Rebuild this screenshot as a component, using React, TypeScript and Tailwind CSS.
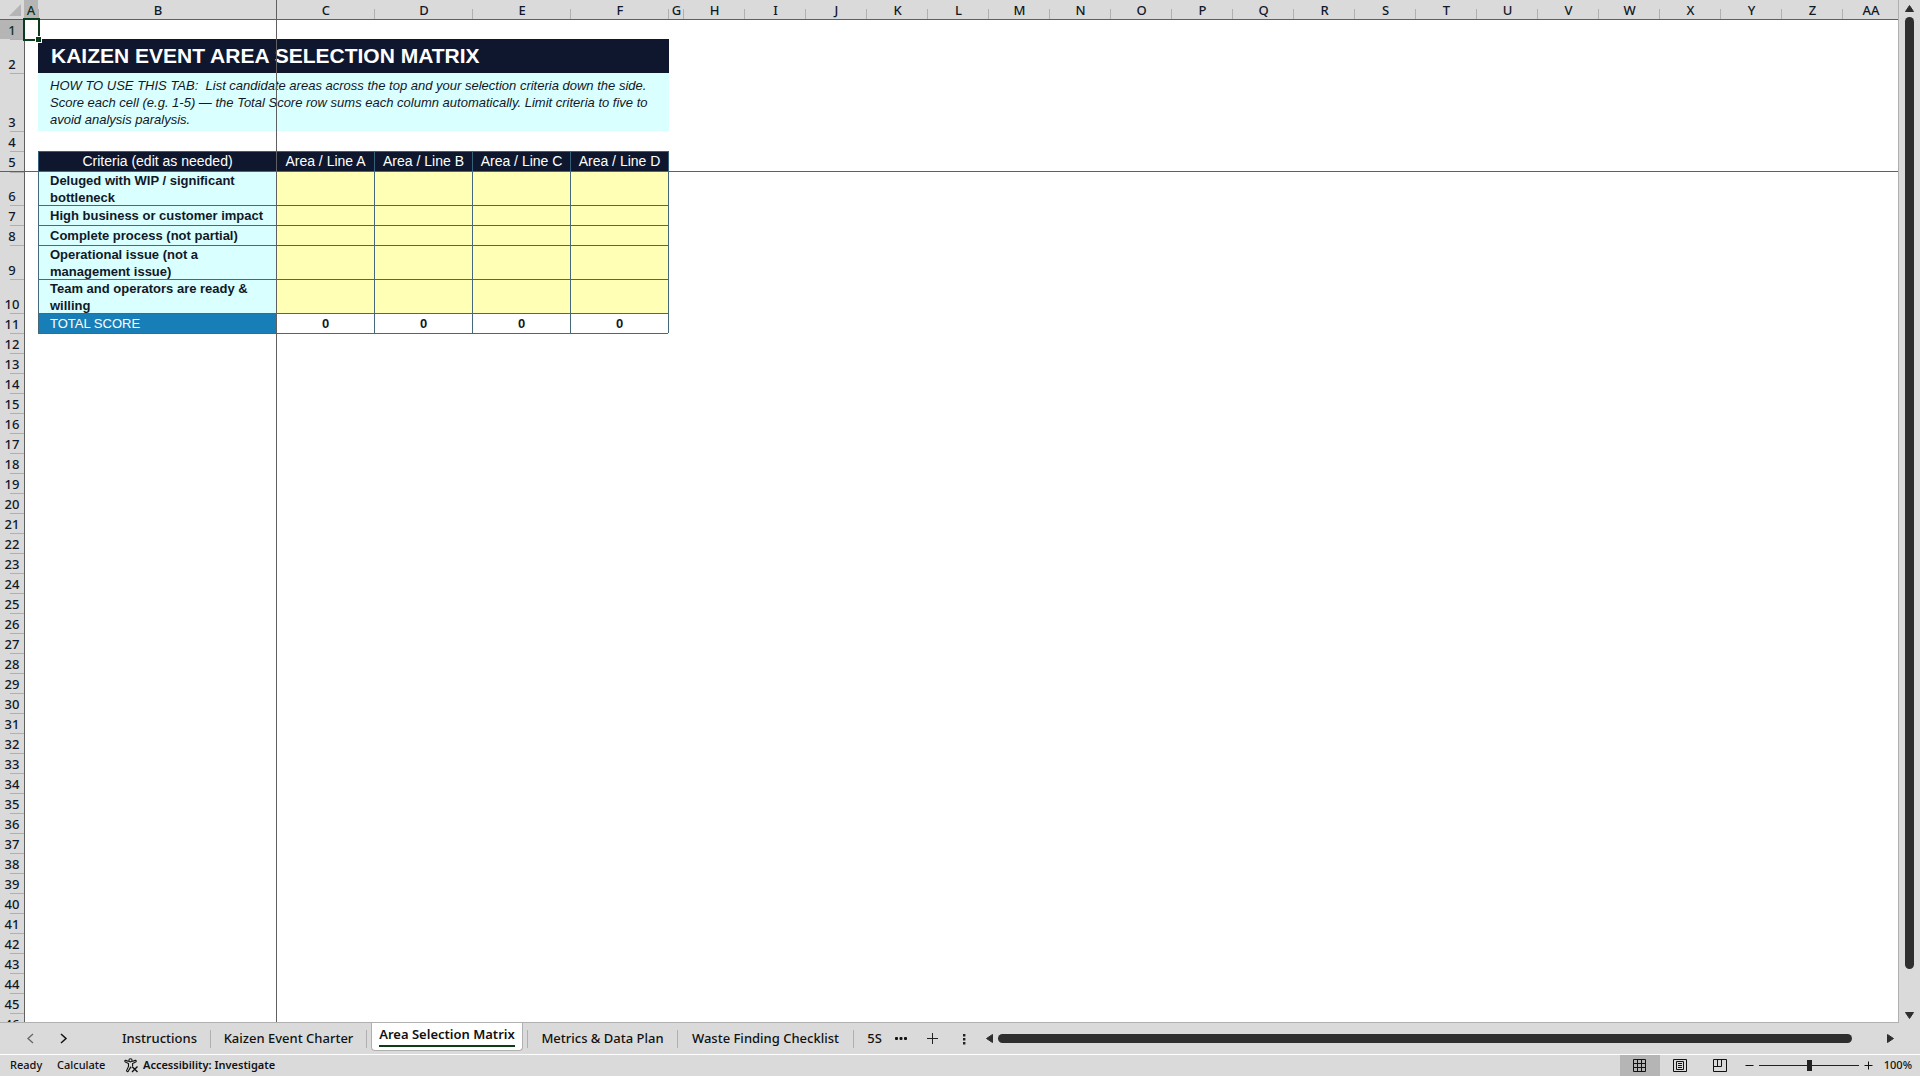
import type { ReactNode } from "react";

const COLUMNS = [
  "A", "B", "C", "D", "E", "F", "G", "H", "I", "J", "K", "L", "M", "N",
  "O", "P", "Q", "R", "S", "T", "U", "V", "W", "X", "Y", "Z", "AA",
];

const AREAS = ["Area / Line A", "Area / Line B", "Area / Line C", "Area / Line D"];

const CRITERIA = [
  { row: 6, height: "h-[34px]", inner: "h-[33px]", label: "Deluged with WIP / significant bottleneck" },
  { row: 7, height: "h-5", inner: "h-[19px]", label: "High business or customer impact" },
  { row: 8, height: "h-5", inner: "h-[19px]", label: "Complete process (not partial)" },
  { row: 9, height: "h-[34px]", inner: "h-[33px]", label: "Operational issue (not a management issue)" },
  { row: 10, height: "h-[34px]", inner: "h-[33px]", label: "Team and operators are ready & willing" },
];

const EMPTY_ROWS = Array.from({ length: 34 }, (_, i) => i + 13);

function colWidth(name: string) {
  if (name === "A") return "w-[14px]";
  if (name === "B") return "w-[238px]";
  if (name === "G") return "w-[15px]";
  if (name === "AA") return "";
  if (["C", "D", "E", "F"].includes(name)) return "w-[98px]";
  return "w-[61px]";
}

function RowHead({ n, line = "" }: { n: number; line?: string }) {
  const look =
    n === 1
      ? "bg-[#b5b5b5] text-[#10331c]"
      : "bg-[#dadada] bg-[linear-gradient(#b0b0b0,#b0b0b0)] bg-[length:14px_1px] bg-[position:right_top] bg-no-repeat";
  return (
    <th scope="row" className={`p-0 align-bottom text-[13px] leading-[17px] font-medium ${look} ${line}`}>
      {n}
    </th>
  );
}

function Sheet() {
  return (
    <div className="relative min-w-0 flex-1 overflow-hidden border-r border-b border-[#b0b0b0] bg-white">
      <table className="w-full table-fixed border-separate border-spacing-0 font-['Liberation_Sans',Arial,sans-serif] text-[13px] text-[#111827]">
        <colgroup>
          <col className="w-6" />
          {COLUMNS.map((c) => (
            <col key={c} className={colWidth(c)} />
          ))}
        </colgroup>
        <thead className="font-['Noto_Sans','Segoe_UI',sans-serif]">
          <tr className="h-[19px]">
            <th className="bg-[#dadada] p-0">
              <svg width="12" height="12" viewBox="0 0 12 12" className="mr-[3px] ml-auto" aria-hidden="true">
                <path d="M12 0v12H0z" fill="#b5b5b5" />
              </svg>
            </th>
            {COLUMNS.map((c) => (
              <th
                key={c}
                scope="col"
                className={
                  c === "A"
                    ? "bg-[#b5b5b5] p-0 pt-0.5 text-[13px] leading-[17px] font-medium text-[#10331c]"
                    : "bg-[#dadada] bg-[linear-gradient(#b0b0b0,#b0b0b0)] bg-[length:1px_10px] bg-[position:left_bottom] bg-no-repeat p-0 pt-0.5 pl-0.5 text-[13px] leading-[17px] font-medium"
                }
              >
                {c}
              </th>
            ))}
          </tr>
        </thead>
        <tbody className="[&>tr>th]:font-['Noto_Sans','Segoe_UI',sans-serif]">
          <tr className="h-5">
            <RowHead n={1} line="border-t border-[#606060]" />
            <td className="relative border-t border-l border-[#606060] p-0">
              <div className="absolute -top-0.5 -left-0.5 z-10 h-[23px] w-[17px] border-2 border-[#0b3d1a]">
                <span className="absolute -right-[3px] -bottom-[3px] size-[5px] bg-[#0b3d1a] outline-1 outline-white" />
              </div>
            </td>
            <td colSpan={26} className="border-t border-[#606060] p-0" />
          </tr>
          <tr className="h-[34px]">
            <RowHead n={2} />
            <td className="border-l border-[#606060] p-0" />
            <td colSpan={5} className="bg-[#0f172e] p-0 pl-[13px] text-[21px] leading-6 font-bold whitespace-nowrap text-white">
              KAIZEN EVENT AREA SELECTION MATRIX
            </td>
            <td colSpan={21} className="border-l border-[#0f172e] p-0" />
          </tr>
          <tr className="h-[58px]">
            <RowHead n={3} />
            <td className="border-l border-[#606060] p-0" />
            <td colSpan={5} className="bg-[#d9ffff] p-0 pt-1 pl-3 align-top leading-[17px] whitespace-nowrap italic">
              HOW TO USE THIS TAB:&nbsp; List candidate areas across the top and your selection criteria down the side.
              <br />
              Score each cell (e.g. 1-5) — the Total Score row sums each column automatically. Limit criteria to five to
              <br />
              avoid analysis paralysis.
            </td>
            <td colSpan={21} className="border-l border-[#d9ffff] p-0" />
          </tr>
          <tr className="h-5">
            <RowHead n={4} />
            <td colSpan={27} className="border-l border-[#606060] p-0" />
          </tr>
          <tr className="h-5">
            <RowHead n={5} />
            <td className="border-l border-[#606060] p-0" />
            <td className="border-t border-l border-[#35607c] bg-[#0f172e] p-0 text-center text-sm leading-[17px] text-white">
              Criteria (edit as needed)
            </td>
            {AREAS.map((area) => (
              <td
                key={area}
                className="border-t border-l border-[#35607c] bg-[#0f172e] p-0 text-center text-sm leading-[17px] whitespace-nowrap text-white"
              >
                {area}
              </td>
            ))}
            <td className="border-l border-[#35607c] p-0" />
            <td colSpan={20} className="p-0" />
          </tr>
          {CRITERIA.map((c) => {
            const top = c.row === 6 ? "border-t-[#606060]" : "border-t-[#45697a]";
            return (
              <tr key={c.row} className={c.height}>
                <RowHead n={c.row} line={c.row === 6 ? "border-t border-[#606060]" : ""} />
                <td className={`border-l border-[#606060] p-0 ${c.row === 6 ? "border-t" : ""}`} />
                <td className={`border-t border-l border-l-[#45697a] bg-[#d9ffff] p-0 pl-[11px] font-bold ${top}`}>
                  <div className={`flex items-center leading-[17px] ${c.inner}`}>{c.label}</div>
                </td>
                {AREAS.map((area) => (
                  <td key={area} className={`border-t border-l border-l-[#45697a] bg-[#ffffb5] p-0 ${top}`} />
                ))}
                <td className={`border-l border-l-[#45697a] p-0 ${c.row === 6 ? "border-t border-t-[#606060]" : ""}`} />
                <td colSpan={20} className={`border-[#606060] p-0 ${c.row === 6 ? "border-t" : ""}`} />
              </tr>
            );
          })}
          <tr className="h-5">
            <RowHead n={11} />
            <td className="border-l border-[#606060] p-0" />
            <td className="border-t border-l border-[#45697a] bg-[#177eb8] p-0 pl-[11px] leading-[17px] text-white">
              TOTAL SCORE
            </td>
            {AREAS.map((area) => (
              <td key={area} className="border-t border-l border-[#45697a] p-0 text-center leading-[17px] font-bold">
                0
              </td>
            ))}
            <td className="border-l border-[#45697a] p-0" />
            <td colSpan={20} className="p-0" />
          </tr>
          <tr className="h-5">
            <RowHead n={12} />
            <td className="border-l border-[#606060] p-0" />
            <td colSpan={5} className="border-t border-[#45697a] p-0" />
            <td colSpan={21} className="p-0" />
          </tr>
          {EMPTY_ROWS.map((n) => (
            <tr key={n} className="h-5">
              <RowHead n={n} />
              <td colSpan={27} className="border-l border-[#606060] p-0" />
            </tr>
          ))}
        </tbody>
      </table>
      {/* freeze pane line runs over the merged cells */}
      <div className="absolute inset-y-0 left-[276px] w-px bg-[#606060]" />
    </div>
  );
}

function VerticalScroll() {
  return (
    <div className="flex w-[21px] shrink-0 flex-col items-center pt-[5px] pr-px pb-1">
      <button aria-label="Scroll up" className="h-[7px]">
        <svg width="9" height="7" viewBox="0 0 9 7">
          <path d="M4.5 0.5L8.5 6.5H0.5z" fill="#2e2e2e" stroke="#2e2e2e" strokeLinejoin="round" />
        </svg>
      </button>
      <div className="mt-[5px] mb-[43px] w-[9px] flex-1 rounded-full bg-[#2e2e2e]" />
      <button aria-label="Scroll down" className="h-[7px]">
        <svg width="9" height="7" viewBox="0 0 9 7">
          <path d="M0.5 0.5H8.5L4.5 6.5z" fill="#2e2e2e" stroke="#2e2e2e" strokeLinejoin="round" />
        </svg>
      </button>
    </div>
  );
}

function Separator() {
  return <div className="h-[18px] w-px shrink-0 bg-[#b0b0b0]" />;
}

function Tab({ width, children }: { width: string; children: ReactNode }) {
  return <button className={`h-full shrink-0 text-center whitespace-nowrap ${width}`}>{children}</button>;
}

function TabBar() {
  return (
    <div className="flex h-[31px] shrink-0 items-center text-[13px] font-medium">
      <button aria-label="Previous sheet" className="ml-[26px] shrink-0">
        <svg width="9" height="11" viewBox="0 0 9 11" fill="none" stroke="#666" strokeWidth="1.3">
          <path d="M7 1L2 5.5L7 10" />
        </svg>
      </button>
      <button aria-label="Next sheet" className="ml-6 shrink-0">
        <svg width="9" height="11" viewBox="0 0 9 11" fill="none" stroke="#111" strokeWidth="1.5">
          <path d="M2 1L7 5.5L2 10" />
        </svg>
      </button>
      <div className="w-[41px] shrink-0" />
      <Tab width="w-[101px]">Instructions</Tab>
      <Separator />
      <Tab width="w-[155px]">Kaizen Event Charter</Tab>
      <Separator />
      <button className="mx-1 -mt-px flex h-[29px] w-[152px] shrink-0 items-center justify-center self-start rounded-b border border-t-0 border-[#b0b0b0] bg-white font-semibold">
        <span className="h-[22px] border-b-2 border-[#0b3d1a] leading-[19px] whitespace-nowrap">Area Selection Matrix</span>
      </button>
      <Separator />
      <Tab width="w-[149px]">Metrics &amp; Data Plan</Tab>
      <Separator />
      <Tab width="w-[175px]">Waste Finding Checklist</Tab>
      <Separator />
      <Tab width="w-[41px]">5S</Tab>
      <button aria-label="More sheets" className="shrink-0">
        <svg width="12" height="3" viewBox="0 0 12 3" fill="#111">
          <rect width="3" height="3" rx="1" />
          <rect x="4.5" width="3" height="3" rx="1" />
          <rect x="9" width="3" height="3" rx="1" />
        </svg>
      </button>
      <button aria-label="New sheet" className="ml-5 shrink-0">
        <svg width="11" height="11" viewBox="0 0 11 11" stroke="#222">
          <path d="M5.5 0v11M0 5.5h11" />
        </svg>
      </button>
      <button aria-label="Resize tabs" className="mt-0.5 ml-[25px] shrink-0">
        <svg width="3" height="11" viewBox="0 0 3 11" fill="#222">
          <path d="M0 0h2.4v2.4H0zM0 4h2.4v2.4H0zM0 8h2.4v2.4H0z" />
        </svg>
      </button>
      <button aria-label="Scroll left" className="ml-5 shrink-0">
        <svg width="7" height="9" viewBox="0 0 7 9">
          <path d="M6.5 0.5V8.5L0.5 4.5z" fill="#2e2e2e" stroke="#2e2e2e" strokeLinejoin="round" />
        </svg>
      </button>
      <div className="mr-[35px] ml-[5px] h-[9px] min-w-0 flex-1 rounded-full bg-[#2e2e2e]" />
      <button aria-label="Scroll right" className="mr-[26px] shrink-0">
        <svg width="7" height="9" viewBox="0 0 7 9">
          <path d="M0.5 0.5V8.5L6.5 4.5z" fill="#2e2e2e" stroke="#2e2e2e" strokeLinejoin="round" />
        </svg>
      </button>
    </div>
  );
}

function StatusBar() {
  return (
    <footer className="flex h-[22px] shrink-0 items-center border-t border-white text-[11px] font-medium">
      <span className="ml-[10px] w-[47px]">Ready</span>
      <span className="w-[67px]">Calculate</span>
      <button className="flex items-center gap-1 pb-px whitespace-nowrap">
        <svg width="15" height="15" viewBox="0 0 15 15" fill="none" stroke="#111" strokeWidth="1.1">
          <circle cx="6.5" cy="2.3" r="1.6" />
          <path d="M4.8 3.6L1.8 2.4C0.7 2.2 0.4 3.6 1.4 4.1L4.5 5.5V8.5L2.6 12.6C2.5 13.8 4 14 4.4 13L6.5 9.2L7.2 10.2" />
          <path d="M8.2 3.6L11.2 2.4C12.4 2.2 12.6 3.6 11.6 4.1L8.6 5.5V8" />
          <path d="M8 8.5L13.5 14M13.5 8.5L8 14" strokeWidth="1.4" />
        </svg>
        <span className="font-semibold">Accessibility: Investigate</span>
      </button>
      <div className="ml-auto flex h-full shrink-0 items-center">
        <button aria-label="Normal view" className="flex h-full w-10 items-center bg-[#b5b5b5] pl-[13px]">
          <svg width="13" height="13" viewBox="0 0 13 13" fill="none" stroke="#111">
            <path d="M0.5 0.5h12v12h-12zM4.5 0.5v12M8.5 0.5v12M0.5 4.5h12M0.5 8.5h12" />
          </svg>
        </button>
        <button aria-label="Page layout view" className="flex h-full w-10 items-center pl-[13px]">
          <svg width="14" height="13" viewBox="0 0 14 13" fill="none" stroke="#111">
            <path d="M0.5 0.5h13v12h-13zM3.5 2.5h7v8h-7zM5 4.5h4M5 6.5h4M5 8.5h4" />
          </svg>
        </button>
        <button aria-label="Page break preview" className="flex h-full w-10 items-center pl-[13px]">
          <svg width="14" height="13" viewBox="0 0 14 13" fill="none" stroke="#111">
            <path d="M0.5 0.5h13v12h-13zM4.5 0.5v7M8.5 0.5v7M0.5 7.5h8" />
          </svg>
        </button>
        <button aria-label="Zoom out" className="ml-[5px]">
          <svg width="9" height="9" viewBox="0 0 9 9" stroke="#111">
            <path d="M0.5 4.5h8" />
          </svg>
        </button>
        <input
          type="range"
          aria-label="Zoom"
          min={0}
          max={200}
          defaultValue={100}
          className="mx-[5px] h-[11px] w-[100px] appearance-none bg-[linear-gradient(#222,#222)] bg-[length:100%_1px] bg-center bg-no-repeat [&::-webkit-slider-thumb]:h-[11px] [&::-webkit-slider-thumb]:w-[5px] [&::-webkit-slider-thumb]:appearance-none [&::-webkit-slider-thumb]:bg-[#222]"
        />
        <button aria-label="Zoom in">
          <svg width="9" height="9" viewBox="0 0 9 9" stroke="#111">
            <path d="M0.5 4.5h8M4.5 0.5v8" />
          </svg>
        </button>
        <button className="mr-2 ml-2 w-[31px] text-right">100%</button>
      </div>
    </footer>
  );
}

export default function App() {
  return (
    <div className="flex h-screen flex-col overflow-hidden bg-[#dadada] font-['Noto_Sans','Segoe_UI',sans-serif] text-[#111]">
      <main className="flex min-h-0 flex-1">
        <Sheet />
        <VerticalScroll />
      </main>
      <TabBar />
      <StatusBar />
    </div>
  );
}
